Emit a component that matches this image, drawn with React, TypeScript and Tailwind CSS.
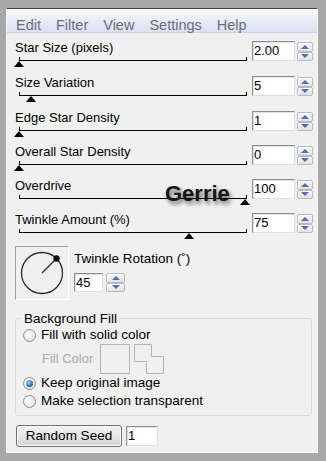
import React from "react";

const rows = [
  { label: "Star Size (pixels)", value: "2.00", left: -6, h: "h-[35px]" },
  { label: "Size Variation", value: "5", left: 6, h: "h-[35px]" },
  { label: "Edge Star Density", value: "1", left: -6, h: "h-[34px]" },
  { label: "Overall Star Density", value: "0", left: -6, h: "h-[34px]" },
  { label: "Overdrive", value: "100", left: 220, h: "h-[34px]" },
  { label: "Twinkle Amount (%)", value: "75", left: 164, h: "h-[34px]" },
];

function Spinner({ cls }: { cls: string }) {
  const btn =
    "flex-1 flex items-center justify-center border border-[#b4b9c2] rounded-[2px] bg-gradient-to-b from-[#f6f6f6] to-[#e2e2e2] shadow-[inset_1px_1px_0_#ffffff]";
  return (
    <div className={"flex flex-col " + cls}>
      <div className={btn}>
        <div className="w-0 h-0 border-l-[4px] border-r-[4px] border-b-[4px] border-l-transparent border-r-transparent border-b-[#4f6fb3]" />
      </div>
      <div className={btn}>
        <div className="w-0 h-0 border-l-[4px] border-r-[4px] border-t-[4px] border-l-transparent border-r-transparent border-t-[#4f6fb3]" />
      </div>
    </div>
  );
}

function Radio({ checked }: { checked?: boolean }) {
  return (
    <div className="w-[13px] h-[13px] rounded-full border border-[#8c8f94] bg-[radial-gradient(circle_at_35%_35%,#ffffff,#d9d9d9)] flex items-center justify-center shrink-0">
      {checked && (
        <div className="w-[7px] h-[7px] rounded-full bg-[radial-gradient(circle_at_40%_35%,#9fd3ff,#1e64b8_70%,#0c3f80)]" />
      )}
    </div>
  );
}

const inputCls =
  "bg-white border border-t-[#8e8e8e] border-l-[#8e8e8e] border-r-[#dedede] border-b-[#dedede] shadow-[inset_1px_1px_0_#e3e3e3] text-[13px] leading-[18px] pl-[1px] text-black";

export default function App() {
  return (
    <div className="relative w-[326px] h-[461px] bg-[#a8a8a8] pl-[6px] pt-[8px] pr-[8px] pb-[8px] font-['Liberation_Sans',Arial,sans-serif] text-black">
      <div className="flex flex-col h-full border-t border-t-[#4d3f3a] border-l border-l-[#f7f7f7] border-r border-r-[#f7f7f7] border-b border-b-[#f7f7f7] bg-[#f0f0f0]">
        {/* menu bar */}
        <div className="h-[24px] border-t border-t-white border-b border-b-[#c8d0e8] bg-gradient-to-b from-[#f6f8fc] to-[#d9e0f2] flex gap-[15px] pl-[9px] pt-[7px] text-[14.5px] leading-[16px] text-[#6a6d7a]">
          <span>Edit</span>
          <span>Filter</span>
          <span>View</span>
          <span>Settings</span>
          <span>Help</span>
        </div>

        {/* body */}
        <div className="flex-1 pt-[7px]">
          {rows.map((r) => (
            <div key={r.label} className={"flex " + r.h}>
              <div className="w-[245px] pl-[8px]">
                <div className="h-[16px] leading-[16px] text-[13px]">{r.label}</div>
                <div className="relative ml-[4px] w-[228px] h-[4px] mt-[1px] border-l border-r border-b border-black">
                  <div
                    className="absolute top-[4px] w-0 h-0 border-l-[5px] border-r-[5px] border-b-[6px] border-l-transparent border-r-transparent border-b-black"
                    style={{ left: r.left }}
                  />
                </div>
              </div>
              <div className={"mt-[1px] w-[43px] h-[20px] " + inputCls}>{r.value}</div>
              <Spinner cls="ml-[2px] mt-[2px] w-[16px] h-[19px]" />
            </div>
          ))}

          {/* rotation */}
          <div className="flex pl-[8px]">
            <div className="w-[54px] h-[54px] border border-t-[#a0a0a0] border-l-[#a0a0a0] border-r-white border-b-white">
              <svg width="52" height="52" viewBox="0 0 52 52">
                <circle cx="26" cy="26" r="20.5" fill="none" stroke="#2a2a2a" strokeWidth="1.3" />
                <line x1="26" y1="26" x2="40" y2="12" stroke="#2a2a2a" strokeWidth="1.3" />
                <circle cx="40.5" cy="11.5" r="3.2" fill="#111" />
              </svg>
            </div>
            <div className="ml-[5px] pt-[5px]">
              <div className="h-[16px] leading-[16px] text-[13.5px]">Twinkle Rotation (˚)</div>
              <div className="flex mt-[6px]">
                <div className={"w-[29px] h-[19px] " + inputCls}>45</div>
                <Spinner cls="ml-[3px] w-[19px] h-[19px]" />
              </div>
            </div>
          </div>

          {/* background fill */}
          <fieldset className="mt-[11px] ml-[8px] mr-[5px] border border-[#d3dce3] rounded-[3px] pb-[5px]">
            <legend className="ml-[6px] px-[2px] text-[13.5px] leading-[15px]">Background Fill</legend>
            <div className="h-[18px] flex items-center pl-[7px] gap-[5px] text-[13.5px]">
              <Radio />
              <span>Fill with solid color</span>
            </div>
            <div className="h-[30px] flex items-center pl-[26px]">
              <span className="w-[58px] text-[13px] text-[#a9a9a9]">Fill Color</span>
              <div className="w-[30px] h-[30px] border border-[#b3b3b3]" />
              <svg className="ml-[4px]" width="30" height="30" viewBox="0 0 30 30">
                <path d="M0.5 0.5H17.5V12.5H29.5V29.5H12.5V17.5H0.5Z" fill="none" stroke="#b3b3b3" />
              </svg>
            </div>
            <div className="h-[18px] flex items-center pl-[7px] gap-[5px] text-[13.5px]">
              <Radio checked />
              <span>Keep original image</span>
            </div>
            <div className="h-[18px] flex items-center pl-[7px] gap-[5px] text-[13.5px]">
              <Radio />
              <span>Make selection transparent</span>
            </div>
          </fieldset>

          {/* random seed */}
          <div className="flex mt-[9px] pl-[9px]">
            <div className="w-[106px] h-[22px] rounded-[3px] border border-[#707070] bg-gradient-to-b from-[#f3f3f3] via-[#e6e6e6] to-[#d2d2d2] shadow-[inset_0_0_0_1px_#fcfcfc] flex items-center justify-center text-[13.5px]">
              Random Seed
            </div>
            <div className={"ml-[4px] mt-[1px] w-[32px] h-[20px] " + inputCls}>1</div>
          </div>
        </div>
      </div>

      {/* watermark */}
      <div className="absolute left-[165px] top-[183px] text-[22px] leading-[22px] font-bold text-[#151515] [text-shadow:2px_3px_4px_rgba(0,0,0,0.6)]">
        Gerrie
      </div>
    </div>
  );
}
